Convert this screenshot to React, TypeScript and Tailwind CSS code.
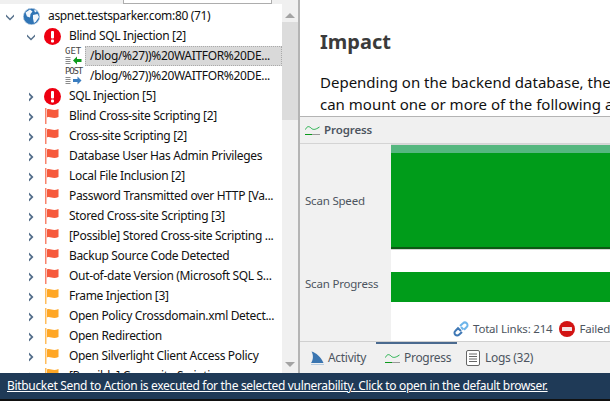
import React from 'react';

const font = "font-['Noto_Sans','Open_Sans',sans-serif]";

const Chevron = ({ open }: { open?: boolean }) => (
  <svg width="10" height="10" viewBox="0 0 10 10" className="shrink-0 translate-y-[1px]">
    {open ? (
      <path d="M1 2.5 L5 6.5 L9 2.5 L9 4.5 L5 8.5 L1 4.5 Z" fill="#546e8a" />
    ) : (
      <path d="M3 0.5 L7.5 5 L3 9.5 L3 7 L5 5 L3 3 Z" fill="#546e8a" />
    )}
  </svg>
);

const ErrorIcon = () => (
  <svg width="17" height="17" viewBox="0 0 17 17" className="shrink-0">
    <circle cx="8.5" cy="8.5" r="8.5" fill="#ee0011" />
    <rect x="7" y="3" width="3" height="7.5" rx="1" fill="#fff" />
    <rect x="7" y="11.5" width="3" height="3" rx="1" fill="#fff" />
  </svg>
);

const Flag = ({ color }: { color: string }) => (
  <svg width="15" height="20" viewBox="0 0 15 20" className="shrink-0">
    <rect x="1" y="2" width="1.5" height="16" fill={color} opacity="0.75" />
    <path d="M3 3.5 C6 2 9 5.5 14.5 3 L14.5 11 C9 13.5 6 10 3 11.5 Z" fill={color} />
  </svg>
);

const Globe = () => (
  <svg width="17" height="17" viewBox="0 0 17 17" className="shrink-0">
    <circle cx="8.5" cy="8.5" r="8.2" fill="#2f74b5" stroke="#b8cde2" strokeWidth="0.8" />
    <path d="M2.5 4.5 L7 1.5 L9.5 3.5 L7.5 6 L7 9.5 L4 8.5 Z" fill="#f2f6fb" />
    <path d="M10 7 L14.5 6 L16 9 L13 13.5 L11 15 L10 10.5 Z" fill="#f2f6fb" />
    <path d="M11 1.5 L14 3 L12 4.5 Z" fill="#f2f6fb" />
  </svg>
);

const MethodIcon = ({ method }: { method: 'GET' | 'POST' }) => (
  <div className="w-[17px] h-[20px] shrink-0 flex flex-col items-start pt-[1px]">
    <span className={`font-['DejaVu_Sans_Mono',monospace] text-[9px] leading-[9px] text-[#444] whitespace-nowrap ${method === 'GET' ? 'tracking-[0px]' : 'tracking-[-1.2px]'}`}>{method}</span>
    <svg width="17" height="9" viewBox="0 0 17 9">
      <path d="M0.5 1.5 H5.5 M0.5 3.5 H5.5 M0.5 5.5 H5.5 M0.5 7.5 H5.5" stroke="#8a8a8a" strokeWidth="1" />
      {method === 'GET' ? (
        <path d="M8 4.5 L12 0.5 L12 3 L16.5 3 L16.5 6 L12 6 L12 8.5 Z" fill="#0d9a1c" />
      ) : (
        <path d="M16.5 4.5 L12.5 0.5 L12.5 3 L8 3 L8 6 L12.5 6 L12.5 8.5 Z" fill="#3a7dc0" />
      )}
    </svg>
  </div>
);

const ProgressIcon = () => (
  <svg width="15" height="11" viewBox="0 0 15 11" className="shrink-0">
    <path d="M0.5 4.5 C2 1 4 1 6 3 C8 5 10 5 14.5 2" fill="none" stroke="#22b04a" strokeWidth="1" />
    <rect x="0" y="9" width="7" height="1" fill="#0b9a1c" />
    <rect x="7" y="9" width="8" height="1" fill="#999" />
  </svg>
);

const LogsIcon = () => (
  <svg width="14" height="16" viewBox="0 0 14 16" className="shrink-0">
    <rect x="0.5" y="0.5" width="13" height="15" rx="1.5" fill="#fff" stroke="#666" />
    <path d="M3 4 H11 M3 6.5 H11 M3 9 H11 M3 11.5 H11" stroke="#666" strokeWidth="1" />
  </svg>
);

const Fin = () => (
  <svg width="15" height="15" viewBox="0 0 15 15" className="shrink-0">
    <path d="M1.5 0.5 C6 1.5 11 6 13.5 12 L1 12 C3.5 8.5 3.5 4 1.5 0.5 Z" fill="#3a75b0" />
    <path d="M1 13.5 H14" stroke="#b5cbe0" strokeWidth="1" />
  </svg>
);

const LinkIcon = () => (
  <svg width="16" height="16" viewBox="0 0 16 16" className="shrink-0" fill="none">
    <path d="M7 5 L10 2.2 C11 1.2 12.7 1.2 13.7 2.2 C14.8 3.3 14.8 5 13.7 6 L11 8.8" stroke="#6db5ea" strokeWidth="2" />
    <path d="M9 11 L6 13.8 C5 14.8 3.3 14.8 2.3 13.8 C1.2 12.7 1.2 11 2.3 10 L5 7.2 L8 10" stroke="#3f78b5" strokeWidth="2" />
    <path d="M8 6 L10.5 8.5" stroke="#6db5ea" strokeWidth="2" />
  </svg>
);

const StopIcon = () => (
  <svg width="16" height="16" viewBox="0 0 16 16" className="shrink-0">
    <circle cx="8" cy="8" r="8" fill="#d21414" />
    <rect x="3" y="6" width="10" height="4" rx="0.5" fill="#f3e4e4" />
  </svg>
);

const RED = '#f65a3c';
const ORANGE = '#ffa726';

const issues: { label: string; color: string }[] = [
  { label: 'Blind Cross-site Scripting [2]', color: RED },
  { label: 'Cross-site Scripting [2]', color: RED },
  { label: 'Database User Has Admin Privileges', color: RED },
  { label: 'Local File Inclusion [2]', color: RED },
  { label: 'Password Transmitted over HTTP [Va...', color: RED },
  { label: 'Stored Cross-site Scripting [3]', color: RED },
  { label: '[Possible] Stored Cross-site Scripting ...', color: RED },
  { label: 'Backup Source Code Detected', color: RED },
  { label: 'Out-of-date Version (Microsoft SQL S...', color: RED },
  { label: 'Frame Injection [3]', color: ORANGE },
  { label: 'Open Policy Crossdomain.xml Detect...', color: ORANGE },
  { label: 'Open Redirection', color: ORANGE },
  { label: 'Open Silverlight Client Access Policy', color: ORANGE },
  { label: '[Possible] Cross-site Scripting', color: ORANGE },
];

const Label = ({ children }: { children: React.ReactNode }) => (
  <span className="whitespace-nowrap text-[12px] tracking-[-0.33px] text-[#111]">{children}</span>
);

const IssueRow = ({ icon, label, open }: { icon: React.ReactNode; label: string; open?: boolean }) => (
  <div className="h-5 flex items-center pl-[26px] shrink-0">
    <div className="w-[18px]"><Chevron open={open} /></div>
    <div className="w-[25px] flex">{icon}</div>
    <Label>{label}</Label>
  </div>
);

const RequestRow = ({ method, selected }: { method: 'GET' | 'POST'; selected?: boolean }) => (
  <div className="h-5 flex items-center pl-[65px] shrink-0">
    <div className="w-5"><MethodIcon method={method} /></div>
    <div className={`h-5 flex-1 flex items-center pl-[5px] ${selected ? 'bg-[#d9d9d9] outline outline-dotted outline-1 -outline-offset-1 outline-[#aaa]' : ''}`}>
      <Label>/blog/%27))%20WAITFOR%20DE...</Label>
    </div>
  </div>
);

const Tab = ({ icon, label, active, className }: { icon: React.ReactNode; label: string; active?: boolean; className: string }) => (
  <div className={`h-full flex items-center pl-[9px] border-t-2 -mt-[1px] shrink-0 ${className} ${active ? 'border-[#4a6a8f]' : 'border-transparent'}`}>
    {icon}
    <span className="text-[12px] tracking-[-0.3px] text-[#4d5560] whitespace-nowrap">{label}</span>
  </div>
);

export default function App() {
  return (
    <div className={`w-[610px] h-[401px] overflow-hidden flex flex-col bg-white ${font}`}>
      <div className="h-[373px] flex shrink-0">
        {/* left pane */}
        <div className="w-[300px] h-full flex flex-col border-r-2 border-[#b4b4b4]">
          <div className="h-1 bg-[#f0f0f0] pl-[123px] pr-[26px] shrink-0">
            <div className="h-1 bg-white border border-t-0 border-[#adadad]" />
          </div>
          <div className="flex-1 flex min-h-0">
            <div className="flex-1 min-w-0 overflow-hidden">
              <div className="h-[22px] pt-[2px] flex items-center pl-[5px]">
                <div className="w-[18px]"><Chevron open /></div>
                <div className="w-[25px] flex"><Globe /></div>
                <Label>aspnet.testsparker.com:80 (71)</Label>
              </div>
              <IssueRow icon={<ErrorIcon />} label="Blind SQL Injection [2]" open />
              <RequestRow method="GET" selected />
              <RequestRow method="POST" />
              <IssueRow icon={<ErrorIcon />} label="SQL Injection [5]" />
              {issues.map((issue) => (
                <IssueRow key={issue.label} icon={<Flag color={issue.color} />} label={issue.label} />
              ))}
            </div>
            {/* scrollbar */}
            <div className="w-4 h-full bg-[#f0f0f0] flex flex-col items-center justify-between shrink-0">
              <div className="w-full">
                <div className="h-[17px] flex items-center justify-center pt-[5px]">
                  <div className="w-0 h-0 border-x-[5px] border-x-transparent border-b-[5px] border-b-[#a3a3a3]" />
                </div>
                <div className="h-[98px] mt-[1px] bg-[#dcdcdc]" />
              </div>
              <div className="h-[14px] flex items-center justify-center mb-[2px]">
                <div className="w-0 h-0 border-x-[5px] border-x-transparent border-t-[5px] border-t-[#a3a3a3]" />
              </div>
            </div>
          </div>
        </div>

        {/* right pane */}
        <div className="flex-1 min-w-0 h-full flex flex-col">
          <div className="h-[116px] shrink-0 overflow-hidden pl-5 pt-[28px]">
            <h1 className="text-[20px] leading-[28px] font-bold text-[#3b3b3b] whitespace-nowrap">Impact</h1>
            <p className="mt-[15px] text-[15px] leading-[22px] text-[#111] whitespace-nowrap">Depending on the backend database, the</p>
            <p className="text-[15px] leading-[22px] text-[#111] whitespace-nowrap">can mount one or more of the following a</p>
          </div>
          <div className="h-[28px] shrink-0 bg-[#f0f0f0] border-y border-t-[#b4b4b4] border-b-[#d4d4d4] flex items-center pl-[5px] gap-[4px]">
            <ProgressIcon />
            <span className="text-[11.5px] tracking-[-0.1px] font-semibold text-[#4d5560]">Progress</span>
          </div>
          <div className="flex-1 min-h-0 flex">
            <div className="w-[91px] h-full bg-[#f1f1f1] shrink-0 pl-[5px] text-[11.5px] tracking-[-0.2px] text-[#4d5560]">
              <div className="mt-[47px] leading-[20px]">Scan Speed</div>
              <div className="mt-[63px] leading-[20px]">Scan Progress</div>
            </div>
            <div className="flex-1 min-w-0 h-full flex flex-col">
              <div className="h-[105px] shrink-0 border-t border-[#d9d9d9] border-b-2 border-b-[#0c5a14] flex flex-col">
                <div className="h-2 bg-[#55b77f]" />
                <div className="flex-1 bg-[#009c1a]" />
              </div>
              <div className="h-[23px] shrink-0 border-t border-[#d4d4d4]" />
              <div className="h-[30px] shrink-0 bg-[#009c1a]" />
              <div className="flex-1 relative">
                <div className="absolute left-[62px] top-[18px] flex items-center text-[11.5px] tracking-[-0.2px] text-[#4d5560] whitespace-nowrap">
                  <LinkIcon />
                  <span className="ml-[4px]">Total Links: 214</span>
                  <span className="ml-[7px]"><StopIcon /></span>
                  <span className="ml-[4px]">Failed</span>
                </div>
              </div>
            </div>
          </div>
          <div className="h-[32px] shrink-0 bg-[#f0f0f0] border-t border-[#d0d0d0] flex items-center pl-[1px]">
            <Tab icon={<span className="mr-[3px] flex"><Fin /></span>} label="Activity" className="w-[75px]" />
            <Tab icon={<span className="mr-[4px] flex"><ProgressIcon /></span>} label="Progress" active className="w-[81px]" />
            <Tab icon={<span className="mr-[5px] flex"><LogsIcon /></span>} label="Logs (32)" className="w-[80px]" />
          </div>
        </div>
      </div>
      <div className="h-[26px] shrink-0 bg-[#1f3a57] flex items-center pl-[7px]">
        <span className="text-[12px] tracking-[-0.32px] text-white underline whitespace-nowrap">Bitbucket Send to Action is executed for the selected vulnerability. Click to open in the default browser.</span>
      </div>
      <div className="flex-1 bg-[#111]" />
    </div>
  );
}
